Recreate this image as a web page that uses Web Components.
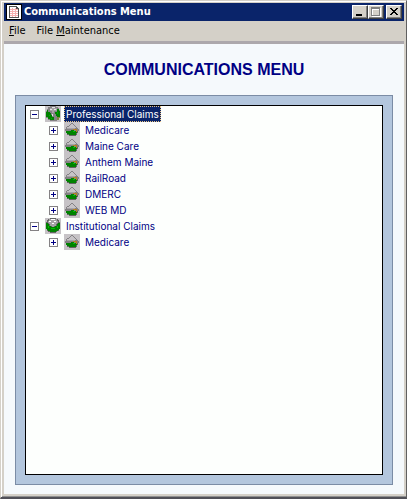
<!DOCTYPE html>
<html lang="en">
<head>
<meta charset="utf-8">
<title>Communications Menu</title>
<style>
  html, body { height: 100%; }
  body { margin: 0; background: #d4d0c8; }
</style>
</head>
<body>
<app-window heading="Communications Menu">
  <menu-bar slot="menu"></menu-bar>
  <claims-panel></claims-panel>
</app-window>

<script>
class AppWindow extends HTMLElement {
  constructor() {
    super();
    this.attachShadow({ mode: 'open' });
  }

  connectedCallback() {
    this.shadowRoot.innerHTML = `
      <style>
        :host {
          display: flex;
          flex-direction: column;
          box-sizing: border-box;
          height: 100%;
          padding: 2px;
          background: #d4d0c8;
          border: 1px solid;
          border-bottom-width: 2px;
          border-color: #d4d0c8 #606060 #505058 #d4d0c8;
          box-shadow: inset 1px 1px #fff, inset 0 -1px #909090;
        }
        header {
          display: flex;
          align-items: center;
          height: 18px;
          margin-left: 1px;
          padding: 0 2px;
          background: #0a246a;
          color: #fff;
          font: bold 11px/18px "DejaVu Sans Condensed", "DejaVu Sans", sans-serif;
        }
        .doc { flex: none; margin-right: 2px; }
        .name { flex: 1; white-space: nowrap; }
        button {
          display: block;
          width: 16px;
          height: 14px;
          padding: 0;
          background: #d4d0c8;
          border: 1px solid;
          border-color: #fff #404040 #404040 #fff;
          box-shadow: inset -1px -1px #808080;
        }
        button svg { display: block; }
        .close { margin-left: 2px; }
        main {
          flex: 1;
          display: flex;
          flex-direction: column;
          margin: 0 0 1px 1px;
          border-top: 3px solid #aca8ac;
          background: #f5f9fc;
        }
      </style>
      <header>
        <svg class="doc" width="16" height="16" viewBox="0 0 16 16" shape-rendering="crispEdges">
          <path fill="#000" d="M0 0h16v16H0z"/>
          <path fill="#fff" d="M1 1h14v14H1z"/>
          <path fill="#505050" d="M3 2h8v1h1v1h1v10H3z"/>
          <path fill="#fff" d="M4 3h6v2h2v8H4z"/>
          <path fill="#f8b0b0" d="M4 5h8v1H4zM4 7h8v1H4zM4 9h8v1H4zM4 11h8v1H4zM6 4h1v9H6zM9 4h1v9H9z"/>
        </svg>
        <span class="name"></span>
        <button type="button" aria-label="Minimize">
          <svg width="14" height="12" shape-rendering="crispEdges"><path d="M3 8h6v2H3z"/></svg>
        </button>
        <button type="button" aria-label="Maximize" disabled>
          <svg width="14" height="12" shape-rendering="crispEdges">
            <path fill="#fff" d="M3 2h9v9H3z"/>
            <path fill="#808080" d="M2 1h9v9H2z"/>
            <path fill="#d4d0c8" d="M3 3h7v6H3z"/>
            <path fill="#fff" d="M3 3h7v1H4v5H3z"/>
          </svg>
        </button>
        <button type="button" class="close" aria-label="Close">
          <svg width="14" height="12" shape-rendering="crispEdges">
            <path d="M3 2h2v1h1v1h2V3h1V2h2v1h-1v1H9v1H8v1h1v1h1v1h1v1H9V8H8V7H6v1H5v1H3V8h1V7h1V6h1V5H5V4H4V3H3z"/>
          </svg>
        </button>
      </header>
      <slot name="menu"></slot>
      <main><slot></slot></main>
    `;
    this.shadowRoot.querySelector('.name').textContent = this.getAttribute('heading');
  }
}

class MenuBar extends HTMLElement {
  constructor() {
    super();
    this.attachShadow({ mode: 'open' });
  }

  connectedCallback() {
    this.shadowRoot.innerHTML = `
      <style>
        :host {
          display: flex;
          gap: 11px;
          height: 20px;
          padding: 0 6px;
          background: #d4d0c8;
        }
        button {
          padding: 0;
          border: 0;
          background: none;
          color: #000;
          font: 11px/20px "DejaVu Sans Condensed", "DejaVu Sans", sans-serif;
        }
      </style>
      <button type="button"><u>F</u>ile</button>
      <button type="button">File <u>M</u>aintenance</button>
    `;
  }
}

class ClaimsPanel extends HTMLElement {
  constructor() {
    super();
    this.attachShadow({ mode: 'open' });
  }

  connectedCallback() {
    this.shadowRoot.innerHTML = `
      <style>
        :host {
          flex: 1;
          display: flex;
          flex-direction: column;
          padding: 0 11px 9px;
          font-family: "Liberation Sans", Arial, sans-serif;
        }
        h1 {
          margin: 0;
          padding: 16px 0 15px;
          text-align: center;
          font-size: 16px;
          line-height: 20px;
          color: #000084;
        }
        .frame {
          flex: 1;
          display: flex;
          padding: 9px;
          border: 1px solid #7b8ca5;
          background: #b3c6dd;
        }
        .list {
          flex: 1;
          border: 1px solid #000;
          background: #fdfffd;
        }
      </style>
      <h1>COMMUNICATIONS MENU</h1>
      <div class="frame">
        <div class="list" role="tree" aria-label="Claims">
          <tree-item label="Professional Claims" icon="globe-tilted" open selected>
            <tree-item label="Medicare"></tree-item>
            <tree-item label="Maine Care"></tree-item>
            <tree-item label="Anthem Maine"></tree-item>
            <tree-item label="RailRoad"></tree-item>
            <tree-item label="DMERC"></tree-item>
            <tree-item label="WEB MD"></tree-item>
          </tree-item>
          <tree-item label="Institutional Claims" icon="globe" open>
            <tree-item label="Medicare"></tree-item>
          </tree-item>
        </div>
      </div>
    `;
  }
}

const ICONS = {
  'globe-tilted': `
    <path fill="#848284" d="M5 0h6v1h2v1h1v2h1v7h-1v2h-2v2H5v-1H3v-2H1V5h1V3h1V1h2z"/>
    <path fill="#a5a2a5" d="M5 2h7v3H9v2H7V5H5z"/>
    <path fill="#e7e3e7" d="M7 1h3v1H7zM5 3h2v1H5zM9 3h2v1H9zM7 8h1v2H7z"/>
    <path fill="#008200" d="M2 4h1v2h2v1h1v2h1v2h2v3H5v-1H3v-2H1V6h1zM12 3h2v2h1v6h-1v1h-2v-2h-1V8h-1V6h2z"/>
    <path fill="#00b200" d="M4 9h1v1H4zM12 6h1v2h-1zM6 12h1v1H6z"/>
    <path fill="#848242" d="M12 11h3v1h-1v2h-2z"/>`,
  'globe': `
    <path fill="#636563" d="M5 0h6v1h2v1h1v2h1v7h-1v2h-2v1h-1v1H5v-1H3v-1H2v-2H1V4h1V2h1V1h2z"/>
    <path fill="#a5a2a5" d="M4 1h8v2h1v2h-1v1h-1v2H9v1H7V8H5V6H4V5H3V3h1z"/>
    <path fill="#fff" d="M6 1h4v1H6zM4 3h2v1H4zM9 3h2v1H9zM7 5h2v1H7z"/>
    <path fill="#008200" d="M1 5h2v1h1v2h2v1h4V8h2V6h1V5h2v6h-1v1h-1v1h-2v1H5v-1H3v-1H2v-1H1z"/>
    <path fill="#00c300" d="M3 8h1v2H3zM6 10h4v1H6zM12 8h1v2h-1z"/>`,
  'basket': `
    <path fill="#848284" d="M7 1h2v1h1v1h1v1h1v1h1v1h1v1h1v2H1V7h1V5h1V4h2V3h1V2h1z"/>
    <path fill="#c6c3c6" d="M7 2h2v1h1v1h1v1h1v1H3V5h2V4h1V3h1z"/>
    <path fill="#a5a2a5" d="M3 6h8v1H3z"/>
    <path fill="#636563" d="M2 9h12v2h-1v2h-1v1H5v-1H3v-2H2z"/>
    <path fill="#008200" d="M2 9h5V8h3v1h3v2h-1v2H5v-1H3v-1H2z"/>
    <path fill="#b58221" d="M9 7h4v1H9zM12 8h1v2h-1z"/>
    <path fill="#00c300" d="M9 9h2v1H9z"/>`
};

class TreeItem extends HTMLElement {
  constructor() {
    super();
    this.attachShadow({ mode: 'open' });
  }

  connectedCallback() {
    const open = this.hasAttribute('open');
    this.setAttribute('role', 'treeitem');
    this.setAttribute('aria-expanded', String(open));
    this.shadowRoot.innerHTML = `
      <style>
        :host { display: block; }
        .row {
          display: flex;
          align-items: center;
          height: 16px;
          padding-left: 4px;
        }
        .toggle {
          width: 9px;
          height: 9px;
          margin-right: 6px;
          padding: 0;
          border: 1px solid #848284;
          background: #fff;
        }
        .toggle svg { display: block; }
        .icon { background: #c6c3c6; }
        .label {
          margin-left: 3px;
          padding: 0 2px;
          color: #000084;
          font: 10px/16px Inter, "Liberation Sans", sans-serif;
          white-space: nowrap;
        }
        :host([selected]) .label {
          padding: 0 1px;
          border: 1px dotted #e7c384;
          line-height: 14px;
          background: #0a246a;
          color: #fff;
        }
        .children { padding-left: 19px; }
      </style>
      <div class="row">
        <button class="toggle" type="button">
          <svg width="7" height="7" shape-rendering="crispEdges"><path fill="#000084" d=""/></svg>
        </button>
        <svg class="icon" width="16" height="16" shape-rendering="crispEdges"></svg>
        <span class="label"></span>
      </div>
      <div class="children" role="group"><slot></slot></div>
    `;
    const toggle = this.shadowRoot.querySelector('.toggle');
    toggle.setAttribute('aria-label', open ? 'Collapse' : 'Expand');
    toggle.querySelector('path').setAttribute('d', open ? 'M1 3h5v1H1z' : 'M1 3h5v1H1zM3 1h1v5H3z');
    this.shadowRoot.querySelector('.icon').innerHTML = ICONS[this.getAttribute('icon') || 'basket'];
    this.shadowRoot.querySelector('.label').textContent = this.getAttribute('label');
  }
}

customElements.define('app-window', AppWindow);
customElements.define('menu-bar', MenuBar);
customElements.define('claims-panel', ClaimsPanel);
customElements.define('tree-item', TreeItem);
</script>
</body>
</html>
